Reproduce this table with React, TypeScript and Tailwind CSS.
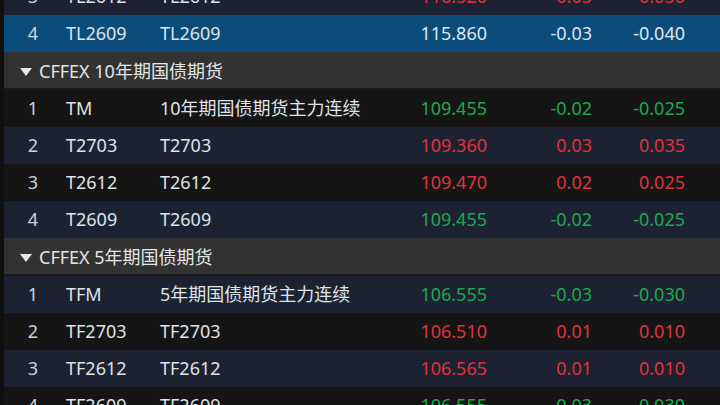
import React from 'react';

type Row = {
  idx: number;
  code: string;
  name: string;
  price: string;
  chg: string;
  pct: string;
  tone: 'up' | 'down' | 'none';
  bg: 'navy' | 'black' | 'sel';
};

type Item = { kind: 'row'; row: Row } | { kind: 'group'; title: string };

const items: Item[] = [
  { kind: 'row', row: { idx: 3, code: 'TL2612', name: 'TL2612', price: '116.320', chg: '0.03', pct: '0.030', tone: 'up', bg: 'navy' } },
  { kind: 'row', row: { idx: 4, code: 'TL2609', name: 'TL2609', price: '115.860', chg: '-0.03', pct: '-0.040', tone: 'none', bg: 'sel' } },
  { kind: 'group', title: 'CFFEX 10年期国债期货' },
  { kind: 'row', row: { idx: 1, code: 'TM', name: '10年期国债期货主力连续', price: '109.455', chg: '-0.02', pct: '-0.025', tone: 'down', bg: 'black' } },
  { kind: 'row', row: { idx: 2, code: 'T2703', name: 'T2703', price: '109.360', chg: '0.03', pct: '0.035', tone: 'up', bg: 'navy' } },
  { kind: 'row', row: { idx: 3, code: 'T2612', name: 'T2612', price: '109.470', chg: '0.02', pct: '0.025', tone: 'up', bg: 'black' } },
  { kind: 'row', row: { idx: 4, code: 'T2609', name: 'T2609', price: '109.455', chg: '-0.02', pct: '-0.025', tone: 'down', bg: 'navy' } },
  { kind: 'group', title: 'CFFEX 5年期国债期货' },
  { kind: 'row', row: { idx: 1, code: 'TFM', name: '5年期国债期货主力连续', price: '106.555', chg: '-0.03', pct: '-0.030', tone: 'down', bg: 'navy' } },
  { kind: 'row', row: { idx: 2, code: 'TF2703', name: 'TF2703', price: '106.510', chg: '0.01', pct: '0.010', tone: 'up', bg: 'black' } },
  { kind: 'row', row: { idx: 3, code: 'TF2612', name: 'TF2612', price: '106.565', chg: '0.01', pct: '0.010', tone: 'up', bg: 'navy' } },
  { kind: 'row', row: { idx: 4, code: 'TF2609', name: 'TF2609', price: '106.555', chg: '-0.03', pct: '-0.030', tone: 'down', bg: 'black' } },
];

const bgClass = { navy: 'bg-[#1c2231]', black: 'bg-[#151515]', sel: 'bg-[#0b4c7b]' };
const toneClass = { up: 'text-[#e0323c]', down: 'text-[#1fa84f]', none: 'text-[#dde6ee]' };

const QuoteRow: React.FC<{ row: Row }> = ({ row }) => (
  <div className={`grid grid-cols-[62px_94px_227px_100px_105px_93px] h-[37px] items-center ${bgClass[row.bg]}`}>
    <span className="text-center pr-[4px] text-[#cfd3d8]">{row.idx}</span>
    <span className="text-[#dfe3e8]">{row.code}</span>
    <span className="text-[#dfe3e8] whitespace-nowrap">{row.name}</span>
    <span className={`text-right ${toneClass[row.tone]}`}>{row.price}</span>
    <span className={`text-right ${toneClass[row.tone]}`}>{row.chg}</span>
    <span className={`text-right ${toneClass[row.tone]}`}>{row.pct}</span>
  </div>
);

const GroupHeader: React.FC<{ title: string }> = ({ title }) => (
  <div className="h-[38px] bg-[#323232] border-b-2 border-[#1a1a1a] flex items-center pl-[15px] pt-[3px] text-[#e4e4e4]">
    <svg width="14" height="10" viewBox="0 0 14 10" className="mr-[6px]">
      <polygon points="1,1 13,1 7,9" fill="#e8e8e8" />
    </svg>
    <span>{title}</span>
  </div>
);

export default function App() {
  return (
    <div
      className="w-[720px] h-[405px] overflow-hidden bg-[#151515] text-[18px]"
      style={{ fontFamily: '"Noto Sans", "Noto Sans CJK SC", sans-serif' }}
    >
      <div className="-mt-[22px] border-l-4 border-[#101010]">
        {items.map((it, i) =>
          it.kind === 'row' ? <QuoteRow key={i} row={it.row} /> : <GroupHeader key={i} title={it.title} />
        )}
      </div>
    </div>
  );
}
